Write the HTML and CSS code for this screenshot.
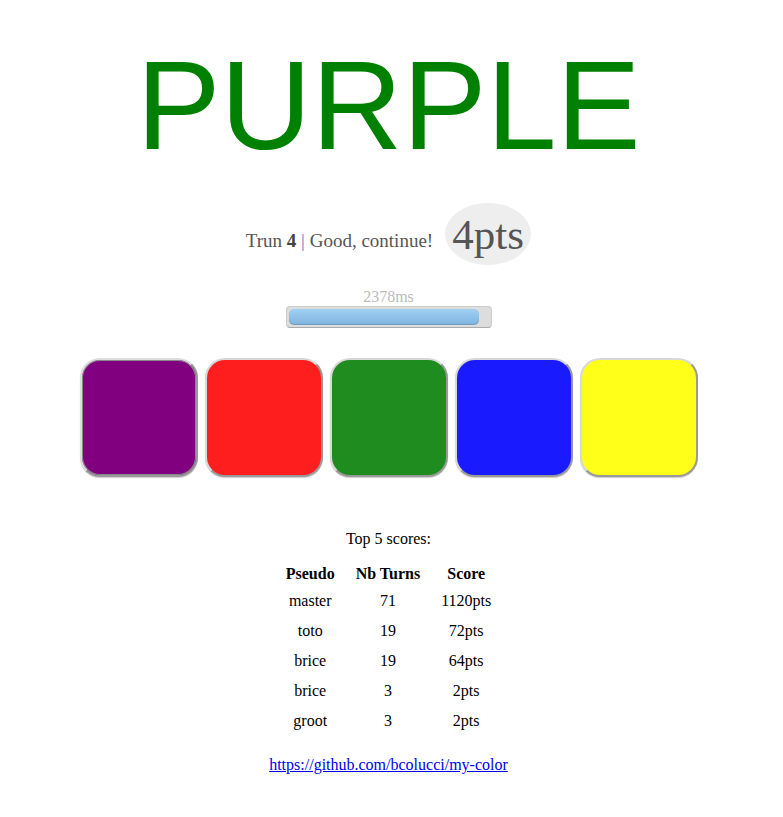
FILE: index.html
```html
<!DOCTYPE html>
<html>
<head>
<meta charset="utf-8">
<link rel="stylesheet" href="styles.css">
</head>
<body>
<div class="app">
  <h1 class="target">PURPLE</h1>
  <div class="status">
    <span class="msg">Trun <b>4</b> <span class="sep">|</span> Good, continue!</span>
    <span class="badge">4pts</span>
  </div>
  <div class="timer">
    <div class="ms">2378ms</div>
    <div class="bar"><div class="fill"></div></div>
  </div>
  <div class="colors">
    <div class="sq purple"></div>
    <div class="sq red"></div>
    <div class="sq green"></div>
    <div class="sq blue"></div>
    <div class="sq yellow"></div>
  </div>
  <div class="scores">
    <p class="title">Top 5 scores:</p>
    <table>
      <thead><tr><th>Pseudo</th><th>Nb Turns</th><th>Score</th></tr></thead>
      <tbody>
        <tr><td>master</td><td>71</td><td>1120pts</td></tr>
        <tr><td>toto</td><td>19</td><td>72pts</td></tr>
        <tr><td>brice</td><td>19</td><td>64pts</td></tr>
        <tr><td>brice</td><td>3</td><td>2pts</td></tr>
        <tr><td>groot</td><td>3</td><td>2pts</td></tr>
      </tbody>
    </table>
    <a class="link" href="#">https://github.com/bcolucci/my-color</a>
  </div>
</div>
</body>
</html>
```

FILE: styles.css
```css
body {
  margin: 8px;
  font-family: "Liberation Serif", "Times New Roman", serif;
  background: #fff;
}
.app {
  display: flex;
  flex-direction: column;
  align-items: center;
  padding-right: 6px;
}
.target {
  margin: 24px 0 0;
  font-family: "Liberation Sans", Arial, sans-serif;
  font-weight: normal;
  font-size: 126px;
  line-height: 148px;
  color: #008000;
}
.status {
  margin-top: 30px;
  display: flex;
  align-items: center;
  gap: 12px;
  color: #555;
  font-size: 19px;
}
.status b { color: #444; }
.sep { color: #7575c0; }
.badge {
  display: inline-flex;
  align-items: center;
  justify-content: center;
  width: 86px;
  height: 62px;
  border-radius: 50%;
  background: #eee;
  font-size: 43px;
  color: #555;
  position: relative;
  top: -7px;
}
.timer {
  margin-top: 16px;
  display: flex;
  flex-direction: column;
  align-items: center;
}
.ms {
  color: #bbb;
  font-size: 16px;
  line-height: 18px;
}
.bar {
  width: 200px;
  height: 16px;
  padding: 2px;
  background: #ddd;
  border: 1px solid #ccc;
  border-bottom-color: #aaa;
  border-radius: 4px;
}
.fill {
  width: 190px;
  height: 16px;
  border-radius: 5px;
  background: linear-gradient(#9fd0f2, #7fb5e0);
  box-shadow: inset 0 -1px 1px rgba(0,0,0,0.15);
}
.colors {
  margin-top: 30px;
  display: flex;
  gap: 7px;
}
.sq {
  width: 114px;
  height: 115px;
  border-radius: 20px;
  border: 2px solid #d8d8d8;
  border-right-color: #999;
  border-bottom-color: #999;
  box-shadow: 0 1px 1px rgba(0,0,0,0.2);
}
.purple {
  background: #800080;
  border-color: #ddd #999 #999 #ddd;
  box-shadow: inset 0 0 0 1px #888, 0 1px 1px rgba(0,0,0,0.2);
}
.red { background: #ff1e1e; }
.green { background: #1e8c1e; }
.blue { background: #1a1aff; }
.yellow { background: #ffff1a; }
.scores {
  margin-top: 46px;
  display: flex;
  flex-direction: column;
  align-items: center;
  font-size: 16px;
}
.title {
  margin: 7px 0 10px;
}
table {
  border-spacing: 19px 0;
  margin-top: 4px;
}
th {
  font-weight: bold;
  line-height: 22px;
}
td {
  text-align: center;
  line-height: 28px;
}
.link {
  margin-top: 20px;
  color: #00e;
  text-decoration: underline;
}
```
